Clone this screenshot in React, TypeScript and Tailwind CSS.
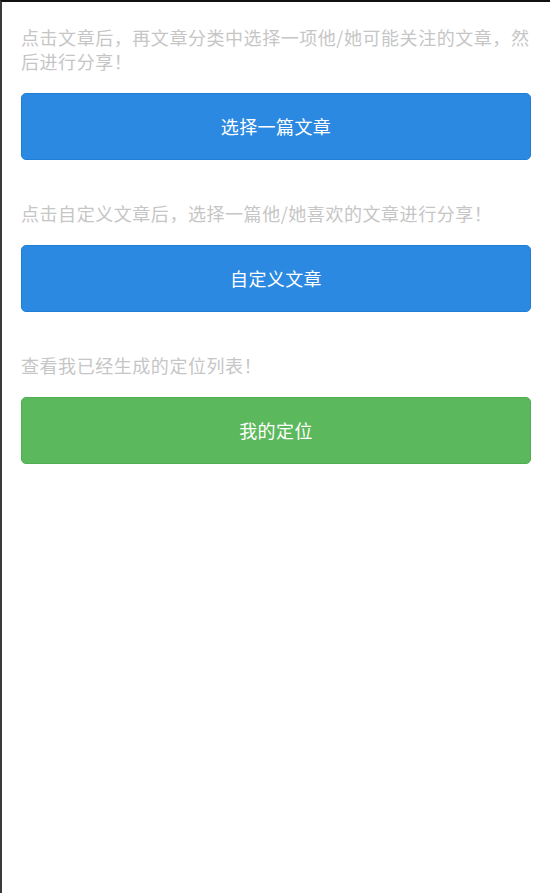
import React from "react";

const font = { fontFamily: '"Noto Sans CJK SC", "Noto Sans", sans-serif' };

function Section({ children, label, color, first }: { children: React.ReactNode; label: string; color: "blue" | "green"; first?: boolean }) {
  return (
    <div className={first ? "pt-[23px]" : "pt-[41px]"}>
      <p className="text-[18px] leading-[24px] tracking-[0.55px] text-[#c6c6c6]">{children}</p>
      <button
        className={
          "mt-[20px] flex h-[67px] w-full items-center justify-center rounded-[5px] border text-[18px] tracking-[0.4px] text-white " +
          (color === "blue" ? "border-[#1f7fd4] bg-[#2b89e1]" : "border-[#4fae4f] bg-[#5cb85c]")
        }
      >
        {label}
      </button>
    </div>
  );
}

export default function App() {
  return (
    <div
      className="min-h-[893px] w-[550px] border-l-2 border-t-2 border-l-[#3a3a3a] border-t-[#111111] bg-white pl-[19px] pr-[19px]"
      style={font}
    >
      <Section first label="选择一篇文章" color="blue">
        <span className="whitespace-nowrap">点击文章后，再文章分类中选择一项他/她可能关注的文章，然</span>
        <br />
        后进行分享！
      </Section>
      <Section label="自定义文章" color="blue">
        点击自定义文章后，选择一篇他/她喜欢的文章进行分享！
      </Section>
      <Section label="我的定位" color="green">
        查看我已经生成的定位列表！
      </Section>
    </div>
  );
}
